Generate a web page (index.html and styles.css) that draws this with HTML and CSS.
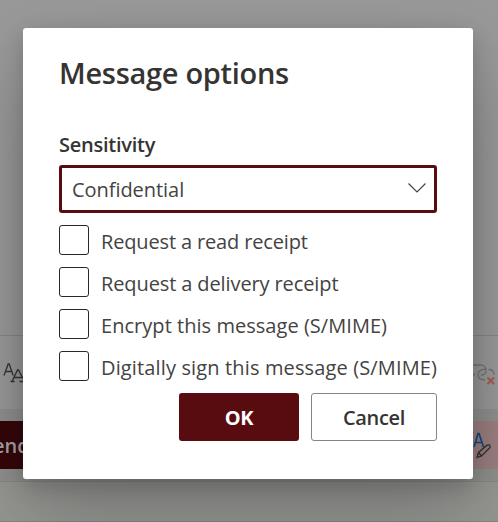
FILE: index.html
```html
<!DOCTYPE html>
<html lang="en">
<head>
<meta charset="utf-8">
<title>Message options</title>
<link rel="stylesheet" href="styles.css">
</head>
<body>
<div class="compose">
  <div class="editor"></div>
  <div class="format-bar">
    <svg class="font-size-icon" width="24" height="24" viewBox="0 0 24 24"><path d="M1 14.500L5.200 3h1l4 11.500M2.500 10.500h6.500M9 20.500L14.500 9h1l6 11.500M10.500 16.500h8M7.500 20.500h4M16.500 20.500h6"/></svg>
    <svg class="unlink-icon" width="28" height="28" viewBox="0 0 28 28"><path class="chain" d="M0 2h10.500C14 2 16 4.500 16 7.500S13.500 12 11 12M0 11.500h5M16.500 6C11 6 8 8 8 11.500S10.500 17 15 17M18.500 6.500c3.500 0 5.500 2 5.500 5"/><path class="cross" d="M17.500 14.500l6.500 6.500M24 14.500L17.500 21"/></svg>
  </div>
  <div class="send-bar">
    <div class="send">end</div>
    <div class="signature">
      <svg width="28" height="34" viewBox="0 0 28 34"><path class="letter-mark" d="M4 16L8 2.500h1L13.500 16M5.500 11.500h7"/><path class="pen" d="M7 26.500l1.500-5L17 14.200q2.500-1 3 .8.500 1-.5 2L11.500 25zM8.500 21.500l3 3.500"/></svg>
    </div>
  </div>
  <div class="footer"></div>
</div>
<div class="dialog" role="dialog">
  <h1>Message options</h1>
  <div class="label"><span>Sensitivity</span></div>
  <div class="select"><span>Confidential</span>
    <svg width="20" height="12" viewBox="0 0 20 12"><path d="M1.500 1.500L10 10l8.500-8.500"/></svg>
  </div>
  <div class="options">
    <label class="option read"><i class="box"></i><span>Request a read receipt</span></label>
    <label class="option delivery"><i class="box"></i><span>Request a delivery receipt</span></label>
    <label class="option encrypt"><i class="box"></i><span>Encrypt this message (S/MIME)</span></label>
    <label class="option sign"><i class="box"></i><span>Digitally sign this message (S/MIME)</span></label>
  </div>
  <div class="actions"><button class="ok">OK</button><button class="cancel">Cancel</button></div>
</div>
</body>
</html>
```
FILE: styles.css
```css
* { box-sizing: border-box; }
body {
  margin: 0;
  width: 498px;
  height: 522px;
  overflow: hidden;
  background: #989894;
  font-family: "Open Sans", "Noto Sans", sans-serif;
  font-size: 20px;
  color: #444342;
}
svg { display: block; fill: none; flex: none; }
.compose { display: flex; flex-direction: column; height: 522px; }
.editor { height: 336px; background: #999; border-bottom: 1px solid #868686; }
.format-bar {
  height: 73px;
  background: #999;
  display: flex;
  justify-content: space-between;
  padding: 25px 0 0 3px;
}
.font-size-icon { stroke: #343434; stroke-width: 1.3; }
.unlink-icon { margin-top: 2px; stroke-width: 1.3; }
.chain { stroke: #747474; }
.cross { stroke: #a85a50; stroke-width: 2; }
.send-bar {
  height: 73px;
  background: #90908f;
  border-bottom: 1px solid #888885;
  padding: 12px 0;
  display: flex;
  justify-content: space-between;
}
.send {
  width: 40px;
  height: 48px;
  background: #36070a;
  color: #a5a5a5;
  font-weight: 600;
  line-height: 49px;
  text-indent: -7px;
}
.signature { width: 40px; height: 48px; background: #9c8080; padding: 10px 0 0 12px; }
.letter-mark { stroke: #174982; stroke-width: 1.7; }
.pen { stroke: #333; stroke-width: 1.4; }
.footer { height: 40px; background: #969693; border-bottom: 1px solid #858585; }
.dialog {
  position: absolute;
  left: 23px;
  top: 28px;
  width: 450px;
  height: 451px;
  padding: 25px 36px 38px;
  background: #fff;
  border-radius: 3px;
  box-shadow: 0 38px 86px rgba(0,0,0,.22), 0 7px 22px rgba(0,0,0,.18);
}
h1 { margin: 0; font-size: 29px; line-height: 40px; font-weight: 600; white-space: nowrap; letter-spacing: -.3px; color: #353433; }
.label { height: 72px; padding-top: 38px; line-height: 28px; font-weight: 600; letter-spacing: -.25px; color: #353433; }
.select {
  height: 48px;
  border: 3px solid #590c0f;
  border-radius: 3px;
  display: flex;
  align-items: center;
  justify-content: space-between;
  padding: 0 7px 0 10px;
  letter-spacing: -.05px;
}
.select svg { stroke: #444; stroke-width: 1.2; margin-top: -3px; }
.options { padding-top: 12px; height: 180px; }
.option { display: flex; height: 42px; gap: 12px; white-space: nowrap; line-height: 33px; }
.read { letter-spacing: -.15px; }
.delivery { letter-spacing: -.11px; }
.encrypt { letter-spacing: .04px; }
.sign { letter-spacing: .14px; }
.box { width: 30px; height: 30px; flex: none; border: 1px solid #292827; border-radius: 3px; }
.actions { display: flex; justify-content: flex-end; gap: 12px; }
button { height: 48px; border-radius: 3px; font: 600 20px "Open Sans", sans-serif; padding: 0; letter-spacing: -.3px; }
.ok { width: 120px; background: #590c0f; color: #fff; border: 0; font-weight: 700; }
.cancel { width: 126px; background: #fff; color: #353433; border: 1px solid #868584; }
```
